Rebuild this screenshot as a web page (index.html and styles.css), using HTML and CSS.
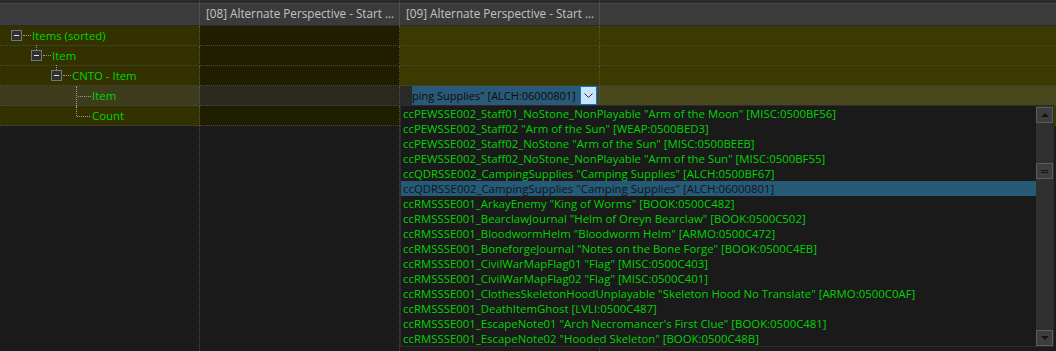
FILE: index.html
```html
<!DOCTYPE html>
<html lang="en">
<head>
    <meta charset="UTF-8">
    <title>Record View</title>
    <link rel="stylesheet" href="styles.css">
</head>
<body>

    <div class="view">
        <div class="grid">
            <div class="hd"></div>
            <div class="hd">[08] Alternate Perspective - Start ...</div>
            <div class="hd">[09] Alternate Perspective - Start ...</div>
            <div class="hd last"></div>

            <div class="c c1">
                <div class="node d0"><span class="box"></span><span class="dash"></span>Items (sorted)</div>
            </div>
            <div class="c c2"></div>
            <div class="c c3"></div>
            <div class="c c4"></div>

            <div class="c c1">
                <div class="node d1"><span class="box sub"></span><span class="dash"></span>Item</div>
            </div>
            <div class="c c2"></div>
            <div class="c c3"></div>
            <div class="c c4"></div>

            <div class="c c1">
                <div class="node d2"><span class="box sub"></span><span class="dash"></span>CNTO - Item</div>
            </div>
            <div class="c c2"></div>
            <div class="c c3"></div>
            <div class="c c4"></div>

            <div class="c c1 hot">
                <div class="node leaf"><span class="elbow"></span>Item</div>
            </div>
            <div class="c c2 hot"></div>
            <div class="c c3 hot">
                <div class="combo">
                    <div class="sel">ping Supplies" [ALCH:06000801]</div>
                    <div class="drop">
                        <svg width="9" height="5" viewBox="0 0 9 5"><path d="M0.5 0.5 L4.5 4.5 L8.5 0.5" fill="none" stroke="#333" stroke-width="1"/></svg>
                    </div>
                </div>
            </div>
            <div class="c c4 hot"></div>

            <div class="c c1">
                <div class="node leaf"><span class="elbow end"></span>Count</div>
            </div>
            <div class="c c2"></div>
            <div class="c c3"></div>
            <div class="c c4"></div>

            <div class="fill"></div>
            <div class="fill"></div>
            <div class="fill"></div>
            <div class="fill last"></div>
        </div>

        <!-- open combo list, drawn over the grid -->
        <div class="list">
            <div class="items">
                <div class="item">ccPEWSSE002_Staff01_NoStone_NonPlayable "Arm of the Moon" [MISC:0500BF56]</div>
                <div class="item">ccPEWSSE002_Staff02 "Arm of the Sun" [WEAP:0500BED3]</div>
                <div class="item">ccPEWSSE002_Staff02_NoStone "Arm of the Sun" [MISC:0500BEEB]</div>
                <div class="item">ccPEWSSE002_Staff02_NoStone_NonPlayable "Arm of the Sun" [MISC:0500BF55]</div>
                <div class="item">ccQDRSSE002_CampingSupplies "Camping Supplies" [ALCH:0500BF67]</div>
                <div class="item on">ccQDRSSE002_CampingSupplies "Camping Supplies" [ALCH:06000801]</div>
                <div class="item">ccRMSSSE001_ArkayEnemy "King of Worms" [BOOK:0500C482]</div>
                <div class="item">ccRMSSSE001_BearclawJournal "Helm of Oreyn Bearclaw" [BOOK:0500C502]</div>
                <div class="item">ccRMSSSE001_BloodwormHelm "Bloodworm Helm" [ARMO:0500C472]</div>
                <div class="item">ccRMSSSE001_BoneforgeJournal "Notes on the Bone Forge" [BOOK:0500C4EB]</div>
                <div class="item">ccRMSSSE001_CivilWarMapFlag01 "Flag" [MISC:0500C403]</div>
                <div class="item">ccRMSSSE001_CivilWarMapFlag02 "Flag" [MISC:0500C401]</div>
                <div class="item">ccRMSSSE001_ClothesSkeletonHoodUnplayable "Skeleton Hood No Translate" [ARMO:0500C0AF]</div>
                <div class="item">ccRMSSSE001_DeathItemGhost [LVLI:0500C487]</div>
                <div class="item">ccRMSSSE001_EscapeNote01 "Arch Necromancer's First Clue" [BOOK:0500C481]</div>
                <div class="item">ccRMSSSE001_EscapeNote02 "Hooded Skeleton" [BOOK:0500C48B]</div>
            </div>
            <div class="sb">
                <div class="sbtn up"><span class="tri-up"></span></div>
                <div class="gap"></div>
                <div class="sbtn thumb"><span class="grip"></span></div>
                <div class="rest"></div>
                <div class="sbtn down"><span class="tri-down"></span></div>
            </div>
        </div>
    </div>

</body>
</html>
```

FILE: styles.css
```css
body {
    margin: 0;
    background-color: #1b1b1b;
    font-family: "Open Sans", "Noto Sans", sans-serif;
    font-size: 11.4px;
}

.view {
    position: relative;
    width: 1056px;
    height: 351px;
    overflow: hidden;
}

.grid {
    display: grid;
    grid-template-columns: 200px 200px 200px 1fr;
    grid-template-rows: 26px repeat(5, 20px) 1fr;
    height: 351px;
}

/* header */
.hd {
    box-sizing: border-box;
    background-color: #3b3b3b;
    border-top: 3px solid #2a2a2a;
    box-shadow: inset 0 1px 0 #464646;
    border-right: 1px solid #505050;
    border-bottom: 1px solid #2a2a2a;
    color: #c4c4c4;
    font-size: 11.7px;
    padding-left: 6px;
    line-height: 21px;
    white-space: nowrap;
    overflow: hidden;
}

.hd.last {
    border-right: none;
}

/* rows */
.c {
    box-sizing: border-box;
    border-right: 1px dotted #555;
    border-bottom: 1px dotted #4a4a3a;
}

.c1 { background-color: #333100; }
.c2 { background-color: #1f1f00; }
.c3 { background-color: #3c3a00; }
.c4 { background-color: #3c3a00; border-right: none; }

.c1.hot { background-color: #3d3d1e; }
.c2.hot { background-color: #29291d; }
.c3.hot { background-color: #48461b; }
.c4.hot { background-color: #48461b; }

.fill {
    border-right: 1px dotted #4a4a4a;
}

.fill.last {
    border-right: none;
}

/* tree */
.node {
    display: flex;
    align-items: center;
    height: 19px;
    color: #00d400;
    white-space: nowrap;
}

.d0 { padding-left: 11px; }
.d1 { padding-left: 31px; }
.d2 { padding-left: 51px; }
.leaf { padding-left: 76px; }

.box {
    position: relative;
    box-sizing: border-box;
    width: 11px;
    height: 11px;
    border: 1px solid #767676;
    background-color: #303030;
}

.box::after {
    content: "";
    position: absolute;
    left: 2px;
    top: 4px;
    width: 5px;
    height: 1px;
    background-color: #e6e6e6;
}

.box.sub::before {
    content: "";
    position: absolute;
    left: 4px;
    top: -6px;
    height: 5px;
    border-left: 1px dotted #999;
}

.dash {
    width: 8px;
    margin: 0 1px 0 1px;
    border-top: 1px dotted #999;
}

.elbow {
    position: relative;
    align-self: stretch;
    width: 15px;
    border-left: 1px dotted #999;
    margin-bottom: -1px;
}

.elbow.end {
    border-left: none;
    width: 16px;
}

.elbow.end::before {
    content: "";
    position: absolute;
    left: 0;
    top: 0;
    height: 10px;
    border-left: 1px dotted #999;
}

.elbow::after {
    content: "";
    position: absolute;
    left: 1px;
    top: 10px;
    width: 13px;
    border-top: 1px dotted #999;
}

/* combo in the hot row */
.combo {
    display: flex;
    height: 19px;
    margin-right: 2px;
    padding-left: 12px;
    background-color: #2a2a2a;
}

.sel {
    flex: 1;
    overflow: hidden;
    white-space: nowrap;
    background-color: #2b5a78;
    color: #0c0c0c;
    font-size: 11px;
    line-height: 19px;
}

.drop {
    display: flex;
    align-items: center;
    justify-content: center;
    box-sizing: border-box;
    width: 17px;
    height: 19px;
    border: 1px solid #0078d7;
    background-color: #cce4f7;
}

/* dropdown list */
.list {
    position: absolute;
    left: 400px;
    top: 105px;
    width: 654px;
    height: 242px;
    box-sizing: border-box;
    border: 1px solid #2c2c2c;
    background-color: #1a1a1a;
    display: flex;
}

.items {
    flex: 1;
    overflow: hidden;
}

.item {
    height: 15px;
    line-height: 15px;
    padding-left: 2px;
    color: #00d400;
    white-space: nowrap;
}

.item.on {
    background-color: #265a76;
    color: #0e161c;
}

.sb {
    width: 17px;
    display: flex;
    flex-direction: column;
    background-color: #303030;
}

.sbtn {
    box-sizing: border-box;
    height: 16px;
    border: 1px solid #5c5c5c;
    background-color: #3d3d3d;
    display: flex;
    align-items: center;
    justify-content: center;
}

.up {
    margin-top: 1px;
}

.gap {
    height: 40px;
}

.rest {
    flex: 1;
}

.tri-up {
    border-left: 4px solid transparent;
    border-right: 4px solid transparent;
    border-bottom: 4px solid #141414;
}

.tri-down {
    border-left: 4px solid transparent;
    border-right: 4px solid transparent;
    border-top: 4px solid #141414;
}

.grip {
    width: 7px;
    height: 1px;
    border-top: 1px solid #141414;
    border-bottom: 1px solid #141414;
}
```
